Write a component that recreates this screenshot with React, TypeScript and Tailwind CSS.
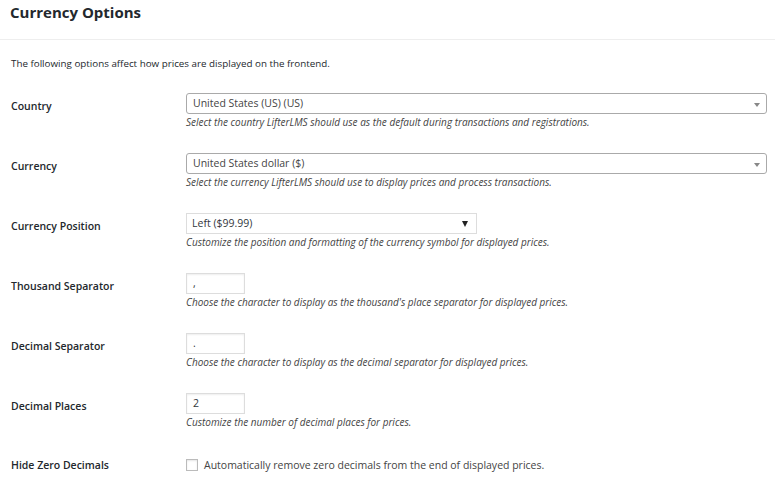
import React from 'react';

const font = { fontFamily: '"Open Sans", "Noto Sans", sans-serif' };

interface RowProps {
  label: string;
  children: React.ReactNode;
  description?: string;
}

const Row: React.FC<RowProps> = ({ label, children, description }) => (
  <div className="flex h-[60px]">
    <div className="w-[186px] shrink-0 pl-[11px] pt-[11px] text-[10.5px] leading-[14px] font-semibold text-[#23282d]">
      {label}
    </div>
    <div className="flex-1 pt-[5px] pr-[8px]">
      {children}
      {description && (
        <p className="mt-[2px] text-[10px] leading-[12px] italic text-[#444]">{description}</p>
      )}
    </div>
  </div>
);

const Select2: React.FC<{ value: string }> = ({ value }) => (
  <div className="relative flex h-[21px] items-center rounded-[3px] border border-[#aaa] bg-white pl-[6px] text-[10.5px] text-[#444]">
    {value}
    <span className="absolute right-[6px] top-[9px] h-0 w-0 border-x-[3px] border-t-[4px] border-x-transparent border-t-[#888]"></span>
  </div>
);

const TextInput: React.FC<{ value: string }> = ({ value }) => (
  <div className="flex h-[21px] w-[59px] items-center border border-[#ddd] bg-white pl-[6px] text-[10.5px] text-[#32373c] shadow-[inset_0_1px_2px_rgba(0,0,0,0.07)]">
    {value}
  </div>
);

export default function App() {
  return (
    <div className="min-h-screen w-[775px] bg-white text-[#23282d]" style={font}>
      <div className="h-[40px] border-b border-[#eee] pl-[10px] pt-[2px]">
        <h2 className="text-[15px] leading-[20px] font-bold text-[#23282d]">Currency Options</h2>
      </div>
      <p className="pl-[11px] pt-[17px] pb-[17px] text-[9.8px] leading-[14px] text-[#23282d]">
        The following options affect how prices are displayed on the frontend.
      </p>

      <Row
        label="Country"
        description="Select the country LifterLMS should use as the default during transactions and registrations."
      >
        <Select2 value="United States (US) (US)" />
      </Row>

      <Row
        label="Currency"
        description="Select the currency LifterLMS should use to display prices and process transactions."
      >
        <Select2 value="United States dollar ($)" />
      </Row>

      <Row
        label="Currency Position"
        description="Customize the position and formatting of the currency symbol for displayed prices."
      >
        <div className="relative flex h-[21px] w-[291px] items-center border border-[#ddd] bg-white pl-[5px] text-[10.5px] text-[#32373c]">
          Left ($99.99)
          <span className="absolute right-[8px] top-[7px] h-0 w-0 border-x-[3.5px] border-t-[6px] border-x-transparent border-t-[#222]"></span>
        </div>
      </Row>

      <Row
        label="Thousand Separator"
        description="Choose the character to display as the thousand's place separator for displayed prices."
      >
        <TextInput value="," />
      </Row>

      <Row
        label="Decimal Separator"
        description="Choose the character to display as the decimal separator for displayed prices."
      >
        <TextInput value="." />
      </Row>

      <Row label="Decimal Places" description="Customize the number of decimal places for prices.">
        <TextInput value="2" />
      </Row>

      <div className="flex h-[34px]">
        <div className="w-[186px] shrink-0 pl-[11px] pt-[10px] text-[10.5px] leading-[14px] font-semibold text-[#23282d]">
          Hide Zero Decimals
        </div>
        <div className="flex items-start pt-[11px]">
          <span className="h-[12px] w-[12px] shrink-0 border border-[#bbb] bg-white shadow-[inset_0_1px_2px_rgba(0,0,0,0.1)]"></span>
          <span className="ml-[6px] text-[10.5px] leading-[12px] text-[#444]">
            Automatically remove zero decimals from the end of displayed prices.
          </span>
        </div>
      </div>
    </div>
  );
}
